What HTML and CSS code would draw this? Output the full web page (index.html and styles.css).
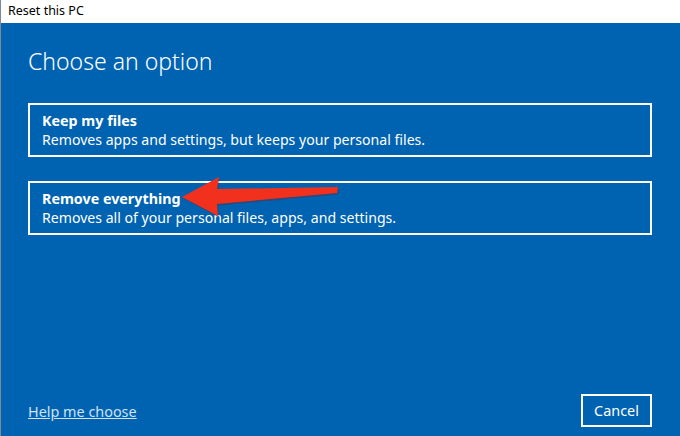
FILE: index.html
```html
<!DOCTYPE html>
<html lang="en">

<head>
  <meta charset="UTF-8" />
  <meta name="viewport" content="width=device-width, initial-scale=1.0" />
  <title>Reset this PC</title>
  <link rel="stylesheet" href="styles.css">
</head>

<body>
  <div class="window">
    <div class="titlebar">Reset this PC</div>
    <div class="content">
      <p class="heading">Choose an option</p>
      <div class="option">
        <p class="option-title">Keep my files</p>
        <p class="option-desc">Removes apps and settings, but keeps your personal files.</p>
      </div>
      <div class="option">
        <p class="option-title">Remove everything</p>
        <p class="option-desc">Removes all of your personal files, apps, and settings.</p>
      </div>
      <div class="footer">
        <a href="#" class="help-link">Help me choose</a>
        <button class="cancel-btn">Cancel</button>
      </div>
    </div>

    <!-- annotation arrow over the second option -->
    <svg class="arrow" width="680" height="436" viewBox="0 0 680 436">
      <path d="M182 197 L219 177 L217 189 L338 187 L337 193 L217 204 L218 216 Z" fill="#7a1a10" opacity="0.35" transform="translate(1 1.5)" />
      <path d="M182 197 L219 177 L217 189 L338 187 L337 193 L217 204 L218 216 Z" fill="#f1301d" />
    </svg>
  </div>
</body>

</html>
```

FILE: styles.css
```css
* {
  box-sizing: border-box;
}

body {
  margin: 0;
  font-family: "Noto Sans", "Open Sans", sans-serif;
}

p {
  margin: 0;
}

.window {
  position: relative;
  width: 680px;
  height: 436px;
  display: flex;
  flex-direction: column;
  background-color: #0063b1;
  border-left: 1px solid #7d8a96;
}

.titlebar {
  height: 23px;
  background-color: #fff;
  color: #000;
  font-size: 12.5px;
  line-height: 21px;
  padding-left: 7px;
}

.content {
  flex: 1;
  display: flex;
  flex-direction: column;
  padding: 0 28px 9px 27px;
  color: #fff;
}

.heading {
  font-size: 23px;
  font-weight: 300;
  line-height: 32px;
  margin-top: 22px;
  margin-bottom: 26px;
}

.option {
  height: 54px;
  border: 2px solid #fff;
  padding: 6px 12px;
  margin-bottom: 24px;
}

.option-title {
  font-size: 14.3px;
  font-weight: 700;
  line-height: 19px;
}

.option-desc {
  font-size: 14.1px;
  line-height: 20px;
}

.footer {
  margin-top: auto;
  display: flex;
  align-items: center;
  justify-content: space-between;
}

.help-link {
  color: #cfe1f2;
  font-size: 14.4px;
  margin-top: 2px;
}

.cancel-btn {
  width: 71px;
  height: 33px;
  background: transparent;
  border: 2px solid #fff;
  color: #fff;
  font-family: "Noto Sans", sans-serif;
  font-size: 14.4px;
  padding: 0;
}

.arrow {
  position: absolute;
  left: -1px;
  top: 0;
  pointer-events: none;
}
```
